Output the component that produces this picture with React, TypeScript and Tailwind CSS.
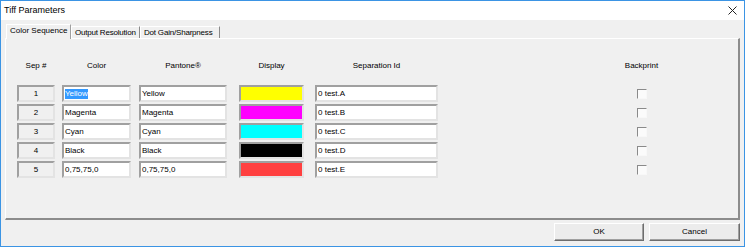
const rows = [
  { n: "1", color: "Yellow", pantone: "Yellow", swatch: "bg-[#ffff00]", id: "0 test.A", selected: true },
  { n: "2", color: "Magenta", pantone: "Magenta", swatch: "bg-[#ff00ff]", id: "0 test.B" },
  { n: "3", color: "Cyan", pantone: "Cyan", swatch: "bg-[#00ffff]", id: "0 test.C" },
  { n: "4", color: "Black", pantone: "Black", swatch: "bg-[#000000]", id: "0 test.D" },
  { n: "5", color: "0,75,75,0", pantone: "0,75,75,0", swatch: "bg-[#ff4040]", id: "0 test.E" },
]

const sunken =
  "border-2 border-t-[#a0a0a0] border-l-[#a0a0a0] border-b-[#e3e3e3] border-r-[#e3e3e3]"

function Field({ text, width, selected }: { text: string; width: string; selected?: boolean }) {
  return (
    <div className={`${width} h-full bg-white ${sunken} flex items-center pl-px overflow-hidden whitespace-nowrap`}>
      <span className={selected ? "bg-[#3399ff] text-white leading-[10px]" : "leading-[10px]"}>{text}</span>
    </div>
  )
}

function Tab({ label, width, active }: { label: string; width: string; active?: boolean }) {
  if (active) {
    return (
      <div
        className={`${width} h-[15px] -mb-px relative z-10 bg-[#f0f0f0] border-t border-l border-white border-r border-r-[#a0a0a0] flex items-center pl-[3px] pb-[2px] whitespace-nowrap`}
      >
        {label}
      </div>
    )
  }
  return (
    <div
      className={`${width} h-[12px] border-t border-l border-white border-r border-r-[#8a8a8a] flex items-center pl-[3px] whitespace-nowrap overflow-hidden tracking-[-0.2px]`}
    >
      {label}
    </div>
  )
}

export default function App() {
  return (
    <div className="w-[745px] h-[247px] bg-[#f0f0f0] border border-[#3b94e4] flex flex-col text-[8px] text-black font-['Liberation_Sans',Arial,sans-serif]">
      {/* title bar */}
      <div className="h-[19px] bg-white flex items-center justify-between pl-[3px] pr-[6px]">
        <span className="text-[9px]">Tiff Parameters</span>
        <svg width="9" height="9" viewBox="0 0 9 9" className="mr-[1px]">
          <path d="M0.5 0.5 L8.5 8.5 M8.5 0.5 L0.5 8.5" stroke="#222" strokeWidth="1" />
        </svg>
      </div>

      <div className="flex-1 flex flex-col px-[4px] pt-[4px]">
        {/* tabs */}
        <div className="flex items-end h-[14px] pl-px">
          <Tab label="Color Sequence" width="w-[65px]" active />
          <Tab label="Output Resolution" width="w-[69px]" />
          <Tab label="Dot Gain/Sharpness" width="w-[80px]" />
        </div>

        {/* tab panel */}
        <div className="h-[182px] border-t border-l border-white border-r-2 border-b-2 border-r-[#8c8c8c] border-b-[#8c8c8c] flex flex-col">
          <div className="flex items-center h-[10px] mt-[22px] ml-[11px] leading-[10px]">
            <div className="w-[38px] text-center">Sep #</div>
            <div className="w-[69px] ml-[7px] text-center">Color</div>
            <div className="w-[88px] ml-[8px] text-center">Pantone®</div>
            <div className="w-[65px] ml-[12px] text-center">Display</div>
            <div className="w-[123px] ml-[11px] text-center">Separation Id</div>
            <div className="w-[41px] ml-[183px] text-center">Backprint</div>
          </div>

          <div className="flex flex-col gap-[2px] mt-[14px] ml-[11px]">
            {rows.map((r) => (
              <div key={r.n} className="flex items-center h-[17px]">
                <div className={`w-[38px] h-full bg-[#f0f0f0] ${sunken} flex items-center justify-center`}>
                  {r.n}
                </div>
                <div className="ml-[7px] h-full flex">
                  <Field text={r.color} width="w-[69px]" selected={r.selected} />
                </div>
                <div className="ml-[8px] h-full flex">
                  <Field text={r.pantone} width="w-[88px]" />
                </div>
                <div className={`w-[65px] ml-[12px] h-full ${sunken} ${r.swatch}`} />
                <div className="ml-[11px] h-full flex">
                  <Field text={r.id} width="w-[123px]" />
                </div>
                <div className="w-[41px] ml-[183px] flex justify-center">
                  <div className="w-[10px] h-[10px] bg-[#fbfbfb] border border-t-[#8a8a8a] border-l-[#8a8a8a] border-b-[#f8f8f8] border-r-[#f8f8f8]" />
                </div>
              </div>
            ))}
          </div>
        </div>

        {/* buttons */}
        <div className="flex justify-end gap-[5px] mt-[3px]">
          <button className="w-[90px] h-[18px] bg-[#ececec] border border-t-white border-l-white border-b-[#6d6d6d] border-r-[#6d6d6d] shadow-[inset_-1px_-1px_0_#a0a0a0] flex items-center justify-center">
            OK
          </button>
          <button className="w-[91px] h-[18px] bg-[#ececec] border border-t-white border-l-white border-b-[#6d6d6d] border-r-[#6d6d6d] shadow-[inset_-1px_-1px_0_#a0a0a0] flex items-center justify-center">
            Cancel
          </button>
        </div>
      </div>
    </div>
  )
}
